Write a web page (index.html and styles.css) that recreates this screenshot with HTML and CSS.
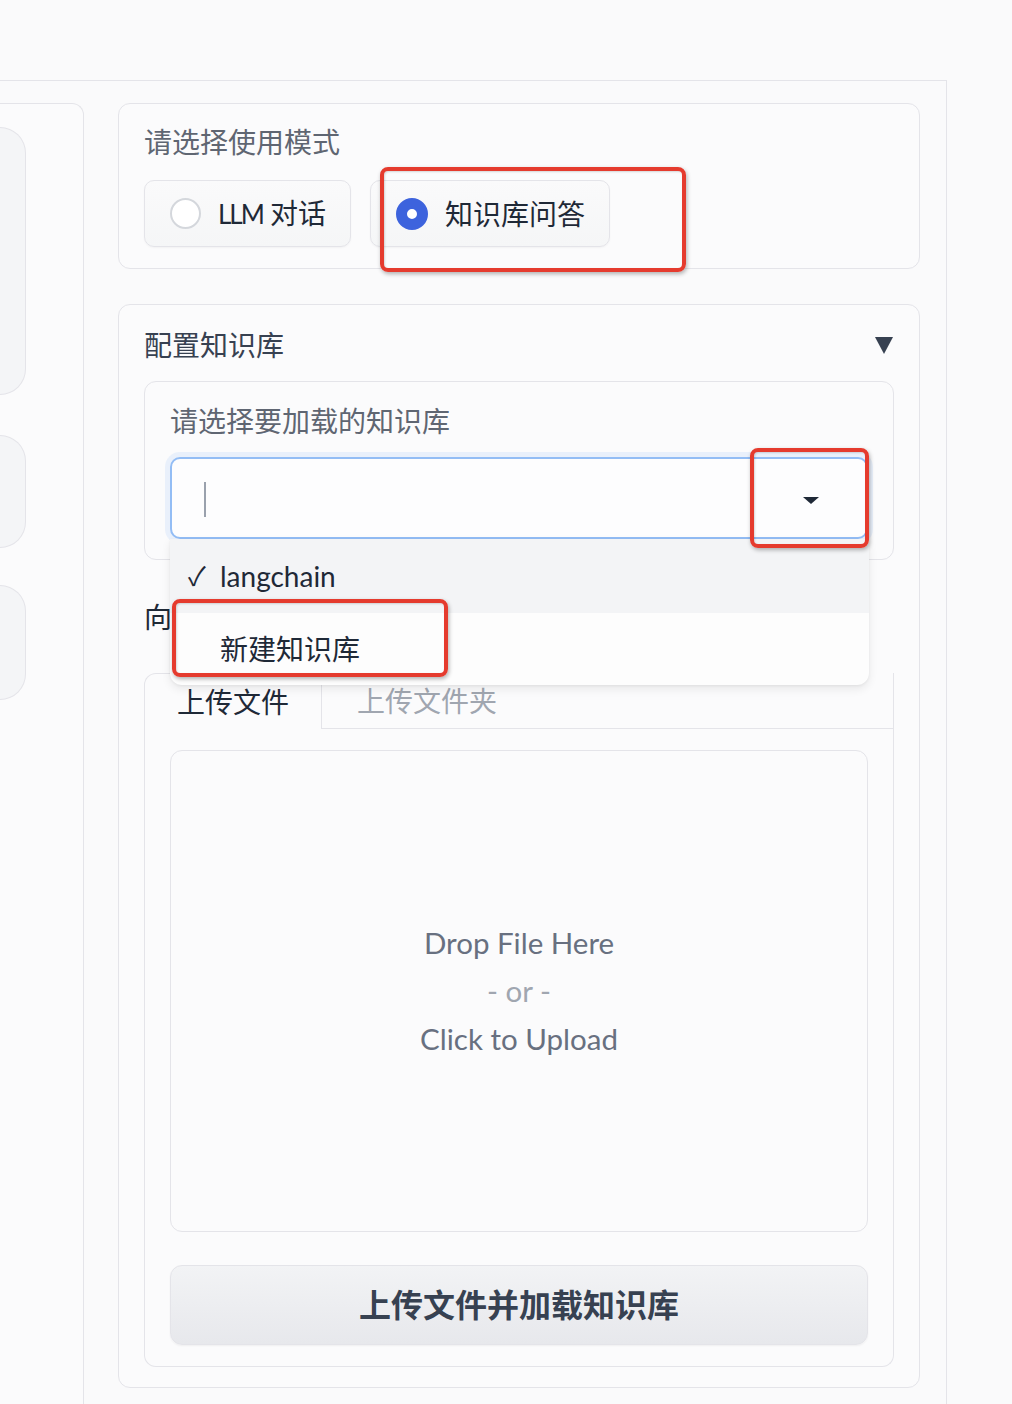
FILE: index.html
```html
<!DOCTYPE html>
<html lang="zh">
<head>
<meta charset="utf-8">
<title>知识库问答</title>
<link rel="stylesheet" href="styles.css">
</head>
<body>
<div class="frame">
  <div class="left-col">
    <div class="left-card">
      <div class="blob b1"></div>
      <div class="blob b2"></div>
      <div class="blob b3"></div>
    </div>
  </div>
  <div class="right-col">
    <div class="card mode-card">
      <div class="label">请选择使用模式</div>
      <div class="radio-row">
        <div class="radio"><span class="circle"></span><span class="radio-text"><span class="lat">LLM</span> 对话</span></div>
        <div class="radio"><span class="circle checked"></span><span class="radio-text">知识库问答</span></div>
      </div>
    </div>
    <div class="card acc">
      <div class="acc-head"><span class="acc-title">配置知识库</span><span class="tri"></span></div>
      <div class="block">
        <div class="label">请选择要加载的知识库</div>
        <div class="dropdown">
          <div class="input"><span class="caret"></span><span class="arrow"></span></div>
          <div class="menu">
            <div class="opt sel"><span class="check">✓</span><span>langchain</span></div>
            <div class="opt"><span class="check"></span><span>新建知识库</span></div>
          </div>
        </div>
      </div>
      <div class="sub-label">向知识库中新增文件</div>
      <div class="tabs">
        <div class="tab-nav">
          <div class="tab active">上传文件</div>
          <div class="tab">上传文件夹</div>
          <div class="nav-fill"></div>
        </div>
        <div class="tab-panel">
          <div class="drop">
            <div class="drop-line">Drop File Here</div>
            <div class="drop-line or">- or -</div>
            <div class="drop-line">Click to Upload</div>
          </div>
          <button class="btn">上传文件并加载知识库</button>
        </div>
      </div>
    </div>
  </div>
</div>
<div class="anno a1"></div>
<div class="anno a2"></div>
<div class="anno a3"></div>
</body>
</html>
```
FILE: styles.css
```css
* { box-sizing: border-box; }
html, body { margin: 0; padding: 0; }
body {
  position: relative;
  width: 1012px;
  height: 1404px;
  overflow: hidden;
  background: #fafafb;
  font-family: "Lato", "Noto Sans CJK SC", sans-serif;
  color: #1f2937;
}
.frame {
  margin-top: 80px;
  width: 947px;
  height: 1324px;
  border-top: 1px solid #e4e4e9;
  border-right: 1px solid #e4e4e9;
  display: flex;
  gap: 34px;
  padding: 22px 26px 0 0;
  overflow: hidden;
}
.left-col { width: 84px; flex: none; display: flex; }
.left-card {
  flex: 1;
  border-top: 1px solid #e4e4e9;
  border-right: 1px solid #e4e4e9;
  border-radius: 0 12px 0 0;
  background: #fbfbfc;
  padding-top: 23px;
  display: flex;
  flex-direction: column;
}
.blob {
  width: 26px;
  border: 1px solid #e4e4e9;
  border-left: none;
  border-radius: 0 26px 26px 0;
  background: #f4f5f7;
}
.b1 { height: 268px; }
.b2 { height: 113px; margin-top: 40px; }
.b3 { height: 115px; margin-top: 37px; }

.right-col { width: 802px; flex: none; display: flex; flex-direction: column; }
.card {
  border: 1px solid #e4e4e9;
  border-radius: 12px;
  background: #fbfbfc;
}
.mode-card { height: 166px; padding: 20px 25px; }
.label {
  font-size: 28px;
  line-height: 36px;
  color: #5f6672;
}
.radio-row { display: flex; gap: 19px; margin-top: 20px; }
.radio {
  height: 67px;
  display: flex;
  align-items: center;
  gap: 17px;
  padding: 0 24px 0 25px;
  border: 1px solid #e4e4e9;
  border-radius: 10px;
  background: linear-gradient(#fafafb, #f5f6f7);
  box-shadow: 0 1px 2px rgba(0,0,0,0.04);
}
.circle {
  width: 31px;
  height: 31px;
  border-radius: 50%;
  border: 2px solid #d4d7dc;
  background: #fff;
}
.circle.checked {
  width: 32px;
  height: 32px;
  border: 11px solid #3d63dd;
  background: #fff;
}
.radio-text { font-size: 28px; line-height: 36px; color: #1f2937; }
.lat { font-size: 26px; letter-spacing: -2px; }

.acc { margin-top: 35px; padding: 0 25px 20px 25px; }
.acc-head {
  display: flex;
  justify-content: space-between;
  align-items: center;
  height: 36px;
  margin-top: 22px;
}
.acc-title { font-size: 28px; line-height: 36px; color: #374151; }
.tri {
  width: 0; height: 0;
  border-left: 9px solid transparent;
  border-right: 9px solid transparent;
  border-top: 17px solid #374151;
  margin-right: 1px;
}
.block {
  margin-top: 18px;
  height: 179px;
  border: 1px solid #e4e4e9;
  border-radius: 12px;
  padding: 21px 25px 0 25px;
}
.dropdown { position: relative; margin-top: 18px; }
.input {
  position: relative;
  height: 82px;
  border: 2px solid #93bdf5;
  border-radius: 10px;
  background: #fdfdfe;
  box-shadow: 0 0 0 5px rgba(218, 231, 250, 0.55);
}
.caret {
  position: absolute;
  left: 32px;
  top: 23px;
  width: 2px;
  height: 35px;
  background: #9aa1ad;
}
.arrow {
  position: absolute;
  right: 47px;
  top: 38px;
  width: 0; height: 0;
  border-left: 8px solid transparent;
  border-right: 8px solid transparent;
  border-top: 7px solid #1f2937;
}
.menu {
  position: absolute;
  top: 100%;
  left: 0;
  right: -1px;
  z-index: 5;
  background: #fdfdfd;
  border-radius: 0 0 12px 12px;
  box-shadow: 0 4px 10px rgba(0,0,0,0.08), 0 1px 3px rgba(0,0,0,0.05);
  overflow: hidden;
}
.opt {
  display: flex;
  align-items: center;
  padding-left: 18px;
  font-size: 28px;
  line-height: 36px;
  color: #1f2937;
  height: 72px;
}
.opt.sel { background: #f3f4f6; height: 74px; }
.check { width: 32px; flex: none; font-size: 26px; }

.sub-label {
  margin-top: 39px;
  font-size: 28px;
  line-height: 36px;
  color: #1f2937;
}
.tabs { margin-top: 38px; }
.tab-nav { display: flex; height: 56px; }
.tab {
  display: flex;
  align-items: center;
  font-size: 28px;
  line-height: 36px;
  color: #a0a6b0;
  padding: 0 35px;
  border-bottom: 1px solid #e4e4e9;
}
.tab.active {
  color: #1f2937;
  padding: 0 32px;
  border: 1px solid #e4e4e9;
  border-bottom: none;
  border-radius: 12px 12px 0 0;
  background: #fbfbfc;
}
.nav-fill { flex: 1; border-bottom: 1px solid #e4e4e9; border-right: 1px solid #e4e4e9; }
.tab-panel {
  border: 1px solid #e4e4e9;
  border-top: none;
  border-radius: 0 0 12px 12px;
  padding: 21px 25px 21px 25px;
}
.drop {
  height: 482px;
  border: 1px solid #e4e4e9;
  border-radius: 12px;
  background: #fbfbfc;
  display: flex;
  flex-direction: column;
  align-items: center;
  justify-content: center;
}
.drop-line { font-size: 29.5px; line-height: 48px; color: #687080; }
.drop-line.or { color: #a0a6b0; }
.btn {
  display: block;
  width: 100%;
  height: 80px;
  margin-top: 33px;
  padding: 0 0 4px 0;
  border: 1px solid #e4e4e9;
  border-radius: 12px;
  background: linear-gradient(#f2f3f5, #e7e8ec);
  font-family: "Noto Sans CJK SC", sans-serif;
  font-size: 32px;
  font-weight: 700;
  color: #374151;
  box-shadow: 0 1px 2px rgba(0,0,0,0.05);
}

.anno {
  position: absolute;
  z-index: 10;
  border: 4px solid #e53b2e;
  border-radius: 8px;
  box-shadow: 1px 2px 4px rgba(0,0,0,0.3), inset 1px 1px 2px rgba(0,0,0,0.15);
}
.a1 { left: 380px; top: 167px; width: 306px; height: 105px; }
.a2 { left: 750px; top: 448px; width: 119px; height: 100px; }
.a3 { left: 172px; top: 599px; width: 276px; height: 78px; }
```
